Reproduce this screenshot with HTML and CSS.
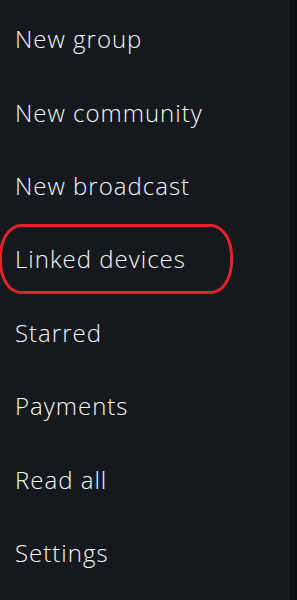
FILE: index.html
```html
<!DOCTYPE html>
<html>
<head>
    <meta charset="utf-8">
    <link rel="stylesheet" href="styles.css">
    <title>Menu</title>
</head>
<body>
<div class="wrapper">
    <ul class="menu">
        <li class="menu-item">New group</li>
        <li class="menu-item">New community</li>
        <li class="menu-item">New broadcast</li>
        <li class="menu-item marked">Linked devices</li>
        <li class="menu-item">Starred</li>
        <li class="menu-item">Payments</li>
        <li class="menu-item">Read all</li>
        <li class="menu-item">Settings</li>
    </ul>
    <div class="edge"></div>
</div>
</body>
</html>
```

FILE: styles.css
```css
* {margin: 0; padding: 0;}

html, body {height: 100%;}
body {background: #15191d;
      font-family: "Open Sans", "Noto Sans", sans-serif;
      font-weight: 350;
      color: #f4f6f8;}

.wrapper {display: flex; height: 100%;}

.menu {flex: 1 1 auto;
       list-style: none;
       padding-top: 2px;}

.menu-item {height: 73.4px;
            display: flex;
            align-items: center;
            padding-left: 15px;
            font-size: 24px;
            letter-spacing: 1px;}

/* red marker round the linked devices row */
.marked {position: relative;}
.marked::after {content: "";
                position: absolute;
                left: -1px; top: 2px;
                width: 228px; height: 64px;
                border: 3px solid #e3222c;
                border-radius: 22px / 32px;}

.edge {flex: 0 0 7px;
       background: #0b0f13;}
```
